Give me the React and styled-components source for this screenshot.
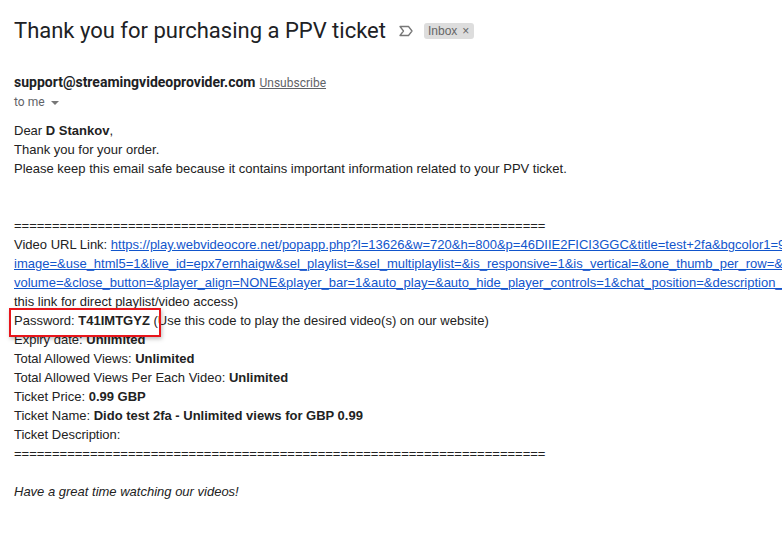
import React from "react";
import styled, { createGlobalStyle } from "styled-components";

const Global = createGlobalStyle`
  html, body { margin: 0; padding: 0; background: #fff; overflow: hidden; }
  body { font-family: "Liberation Sans", Arial, sans-serif; color: #222; }
`;

const Page = styled.div`
  width: 782px;
  height: 538px;
  overflow: hidden;
  padding-left: 14px;
  box-sizing: border-box;
`;

const TitleRow = styled.div`
  display: flex;
  align-items: center;
  gap: 0;
  padding-top: 16px;
  height: 30px;
`;

const Title = styled.h2`
  margin: 0;
  font-family: Roboto, "Open Sans", sans-serif;
  font-weight: 400;
  font-size: 22px;
  line-height: 28px;
  color: #202124;
  white-space: nowrap;
`;

const ImportanceIcon = styled.svg`
  margin-left: 12px;
  width: 16px;
  height: 16px;
`;

const Label = styled.span`
  margin-left: 10px;
  display: inline-flex;
  align-items: center;
  gap: 5px;
  background: #ddd;
  color: #666;
  border-radius: 3px;
  font-family: "Liberation Sans", Arial, sans-serif;
  font-size: 12px;
  line-height: 16px;
  padding: 0 5px 0 4px;
  height: 16px;
`;

const LabelX = styled.span`
  font-size: 12px;
  color: #666;
`;

const SenderBlock = styled.div`
  margin-top: 26px;
`;

const SenderLine = styled.div`
  display: flex;
  align-items: baseline;
  gap: 4px;
  height: 20px;
  line-height: 20px;
`;

const SenderName = styled.span`
  font-family: Roboto, "Liberation Sans", sans-serif;
  font-weight: 700;
  font-size: 14px;
  color: #202124;
`;

const Unsub = styled.a`
  font-family: Roboto, "Liberation Sans", sans-serif;
  font-size: 12px;
  color: #5f6368;
  text-decoration: underline;
`;

const ToLine = styled.div`
  display: flex;
  align-items: center;
  gap: 6px;
  font-family: Roboto, "Liberation Sans", sans-serif;
  font-size: 12px;
  color: #5f6368;
  height: 20px;
  line-height: 20px;
`;

const Caret = styled.span`
  width: 0;
  height: 0;
  border-left: 4px solid transparent;
  border-right: 4px solid transparent;
  border-top: 4px solid #777;
  margin-top: 1px;
`;

const Body = styled.div`
  position: relative;
  margin-top: 9px;
  font-family: "Liberation Sans", Arial, sans-serif;
  font-size: 13px;
  line-height: 19px;
  color: #222;
`;

const Line = styled.div`
  white-space: nowrap;
  height: 19px;
  font-style: ${(p) => (p.$italic ? "italic" : "normal")};
`;

const Link = styled.a`
  color: #1155cc;
  text-decoration: underline;
`;

const HighlightBox = styled.div`
  position: absolute;
  left: -5px;
  top: 187px;
  width: 148px;
  height: 25px;
  border: 2px solid #e8151b;
  box-shadow: 1px 2px 4px rgba(0, 0, 0, 0.25);
  pointer-events: none;
`;

const rule = "=".repeat(70);

export default function App() {
  return (
    <>
      <Global />
      <Page>
        <TitleRow>
          <Title>Thank you for purchasing a PPV ticket</Title>
          <ImportanceIcon viewBox="0 0 16 16">
            <path
              d="M2 3.5 H10.5 L14 8 L10.5 12.5 H2 L5.5 8 Z"
              fill="none"
              stroke="#777"
              strokeWidth="1.3"
              strokeLinejoin="round"
            />
          </ImportanceIcon>
          <Label>
            Inbox<LabelX>×</LabelX>
          </Label>
        </TitleRow>
        <SenderBlock>
          <SenderLine>
            <SenderName>support@streamingvideoprovider.com</SenderName>
            <Unsub href="#">Unsubscribe</Unsub>
          </SenderLine>
          <ToLine>
            to me <Caret />
          </ToLine>
        </SenderBlock>
        <Body>
          <Line>
            Dear <b>D Stankov</b>,
          </Line>
          <Line>Thank you for your order.</Line>
          <Line>Please keep this email safe because it contains important information related to your PPV ticket.</Line>
          <Line />
          <Line />
          <Line>{rule}</Line>
          <Line>
            Video URL Link:{" "}
            <Link href="#">
              https://play.webvideocore.net/popapp.php?l=13626&amp;w=720&amp;h=800&amp;p=46DIIE2FICI3GGC&amp;title=test+2fa&amp;bgcolor1=9
            </Link>
          </Line>
          <Line>
            <Link href="#">
              image=&amp;use_html5=1&amp;live_id=epx7ernhaigw&amp;sel_playlist=&amp;sel_multiplaylist=&amp;is_responsive=1&amp;is_vertical=&amp;one_thumb_per_row=&amp;
            </Link>
          </Line>
          <Line>
            <Link href="#">
              volume=&amp;close_button=&amp;player_align=NONE&amp;player_bar=1&amp;auto_play=&amp;auto_hide_player_controls=1&amp;chat_position=&amp;description_
            </Link>
          </Line>
          <Line>this link for direct playlist/video access)</Line>
          <Line>
            Password: <b>T41IMTGYZ</b> (Use this code to play the desired video(s) on our website)
          </Line>
          <Line>
            Expiry date: <b>Unlimited</b>
          </Line>
          <Line>
            Total Allowed Views: <b>Unlimited</b>
          </Line>
          <Line>
            Total Allowed Views Per Each Video: <b>Unlimited</b>
          </Line>
          <Line>
            Ticket Price: <b>0.99 GBP</b>
          </Line>
          <Line>
            Ticket Name: <b>Dido test 2fa - Unlimited views for GBP 0.99</b>
          </Line>
          <Line>Ticket Description:</Line>
          <Line>{rule}</Line>
          <Line />
          <Line $italic>Have a great time watching our videos!</Line>
          <HighlightBox />
        </Body>
      </Page>
    </>
  );
}
